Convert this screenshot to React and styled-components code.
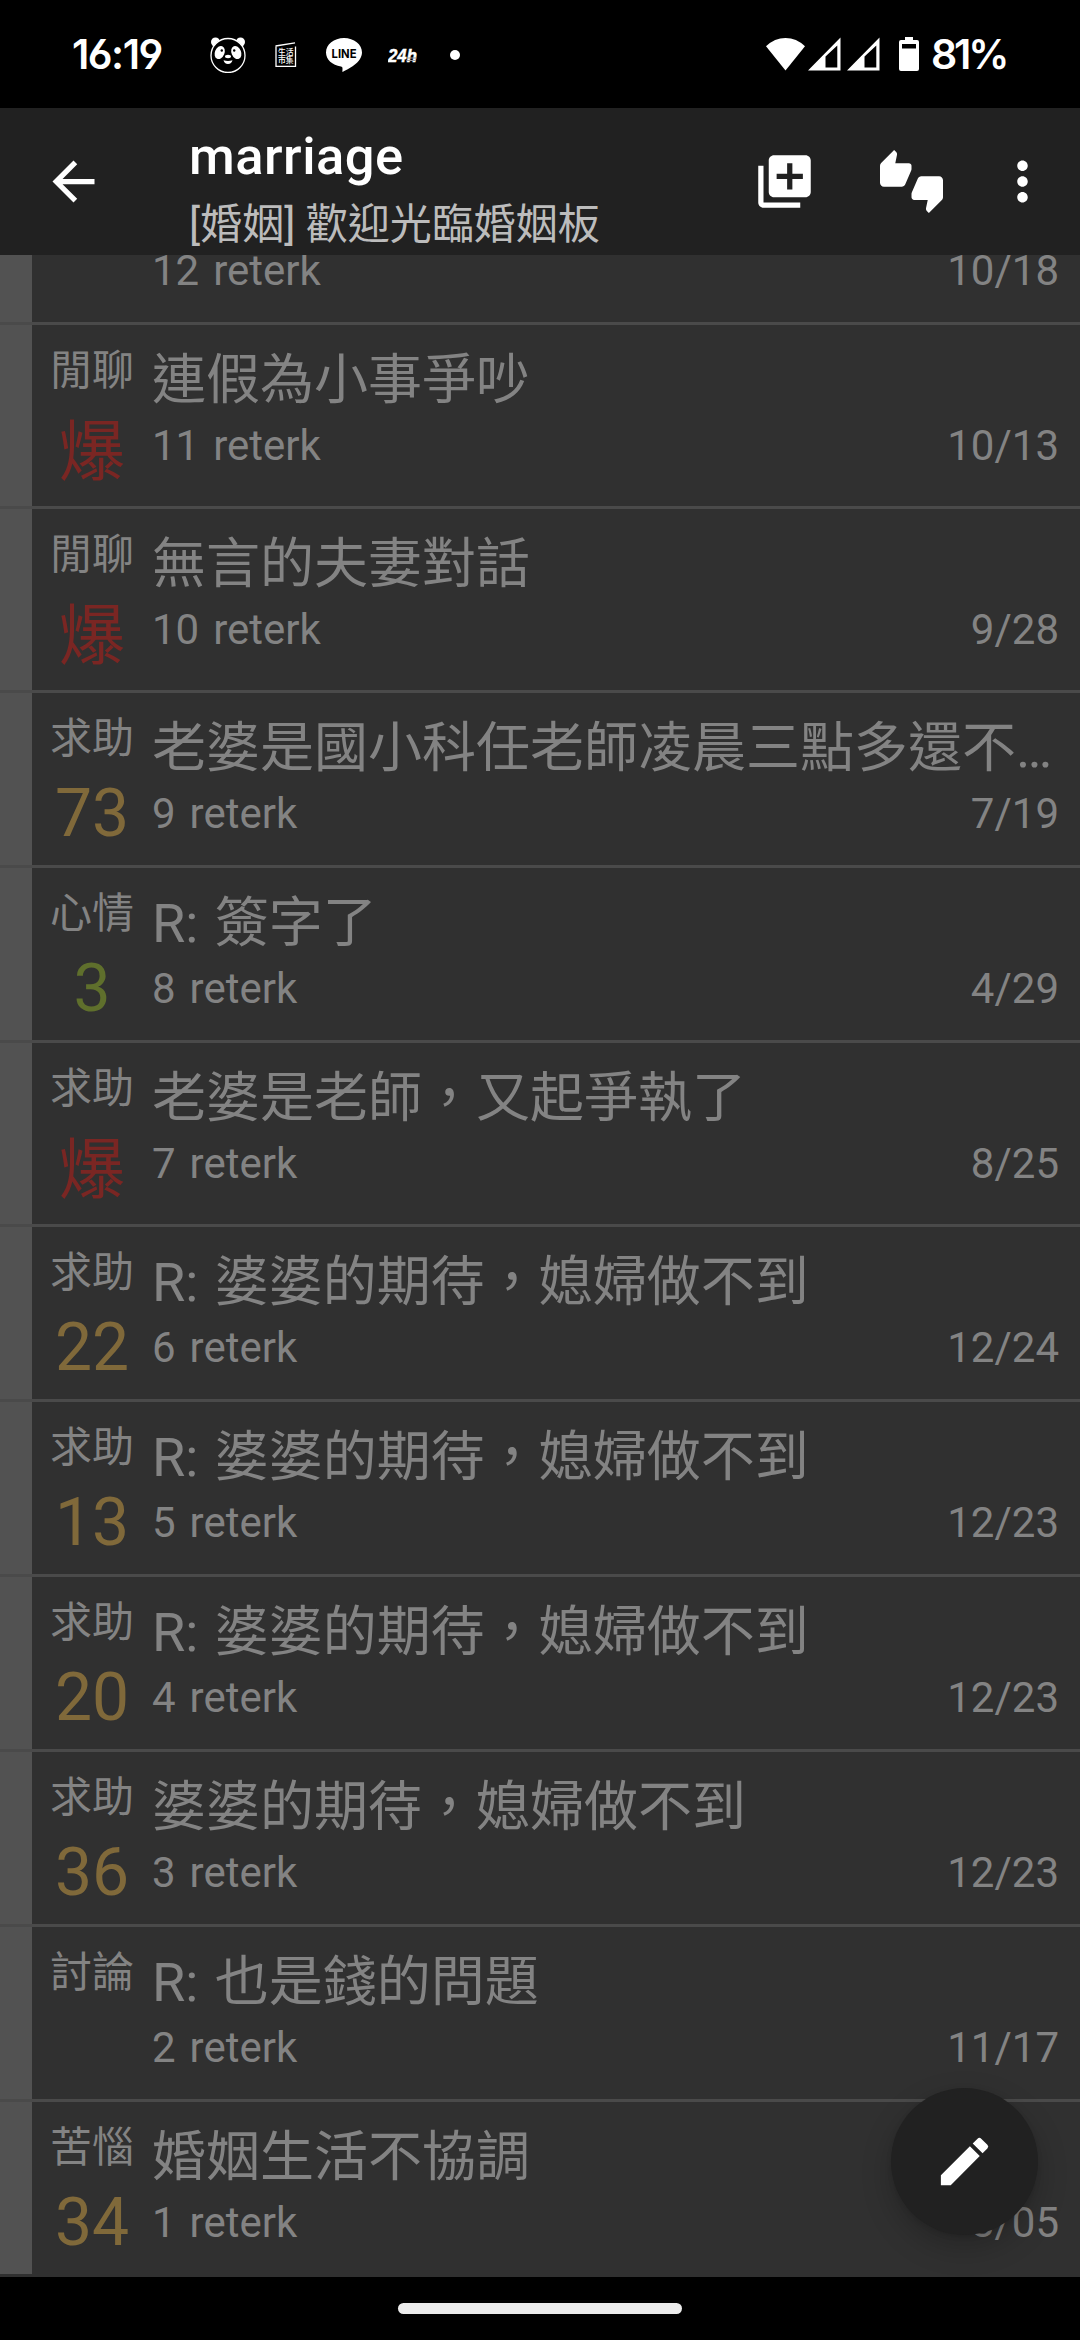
import React from "react";
import styled, { createGlobalStyle } from "styled-components";
import {
  MdArrowBack,
  MdEdit,
  MdLibraryAdd,
  MdMoreVert,
  MdThumbsUpDown,
} from "react-icons/md";

const GlobalStyle = createGlobalStyle`
  * {
    box-sizing: border-box;
  }
  body {
    margin: 0;
    background: #000;
    font-family: Roboto, "Noto Sans CJK TC", sans-serif;
  }
`;

const countColors = {
  hot: "#7a2623",
  mid: "#80693a",
  low: "#5f6f2c",
};

const posts = [
  { id: 12, tag: "", title: "", date: "10/18" },
  { id: 11, tag: "閒聊", title: "連假為小事爭吵", date: "10/13", count: "爆", level: "hot" },
  { id: 10, tag: "閒聊", title: "無言的夫妻對話", date: "9/28", count: "爆", level: "hot" },
  { id: 9, tag: "求助", title: "老婆是國小科任老師凌晨三點多還不…", date: "7/19", count: "73", level: "mid" },
  { id: 8, tag: "心情", title: "R: 簽字了", date: "4/29", count: "3", level: "low" },
  { id: 7, tag: "求助", title: "老婆是老師，又起爭執了", date: "8/25", count: "爆", level: "hot" },
  { id: 6, tag: "求助", title: "R: 婆婆的期待，媳婦做不到", date: "12/24", count: "22", level: "mid" },
  { id: 5, tag: "求助", title: "R: 婆婆的期待，媳婦做不到", date: "12/23", count: "13", level: "mid" },
  { id: 4, tag: "求助", title: "R: 婆婆的期待，媳婦做不到", date: "12/23", count: "20", level: "mid" },
  { id: 3, tag: "求助", title: "婆婆的期待，媳婦做不到", date: "12/23", count: "36", level: "mid" },
  { id: 2, tag: "討論", title: "R: 也是錢的問題", date: "11/17" },
  { id: 1, tag: "苦惱", title: "婚姻生活不協調", date: "8/05", count: "34", level: "mid" },
];

const PandaIcon = () => (
  <svg width="36" height="36" viewBox="0 0 36 36">
    <circle cx="5.500" cy="5" r="4.500" fill="#fff" />
    <circle cx="30.500" cy="5" r="4.500" fill="#fff" />
    <circle cx="18" cy="18.500" r="17" fill="#000" stroke="#fff" strokeWidth="1.300" />
    <ellipse cx="9.700" cy="15.500" rx="4.800" ry="6.800" fill="#fff" transform="rotate(22 9.700 15.500)" />
    <ellipse cx="26.300" cy="15.500" rx="4.800" ry="6.800" fill="#fff" transform="rotate(-22 26.300 15.500)" />
    <circle cx="11.800" cy="13.500" r="1.200" fill="#000" />
    <circle cx="24.200" cy="13.500" r="1.200" fill="#000" />
    <ellipse cx="18" cy="19.500" rx="3" ry="1.700" fill="#fff" />
    <path d="M13.500 23.300q4.500 1.600 9 0q-.8 3.700-4.500 3.700t-4.500-3.700z" fill="#fff" />
  </svg>
);

const MarketIcon = () => (
  <svg width="22" height="26" viewBox="0 0 22 26">
    <path d="M1 4.500V24.300H20.500V4.500M.5 4L20 .8" fill="none" stroke="#fff" strokeWidth="1.300" />
    <text x="3" y="13" fontSize="7.800" fontWeight="500" fill="#fff" fontFamily="Noto Sans CJK TC">生活</text>
    <text x="3" y="21.300" fontSize="7.800" fontWeight="500" fill="#fff" fontFamily="Noto Sans CJK TC">市集</text>
  </svg>
);

const LineIcon = () => (
  <svg width="36" height="36" viewBox="0 0 36 36">
    <path d="M18 1C8 1 0 7.400 0 15.500c0 7.200 6.200 12.600 15 14 1.700.4 1.700 1.300 1.400 5.500 5.600-2.600 19.600-9.500 19.600-19.500C36 7.400 28 1 18 1z" fill="#fff" />
    <text x="18" y="20.700" textAnchor="middle" fontSize="12" fontWeight="700" textLength="25" lengthAdjust="spacingAndGlyphs" fill="#000" fontFamily="Inter">LINE</text>
  </svg>
);

const DayIcon = () => (
  <svg width="34" height="26" viewBox="0 0 34 26">
    <text x="0" y="20" fontSize="19" fontWeight="700" fontStyle="italic" textLength="29" lengthAdjust="spacingAndGlyphs" fill="#fff" stroke="#fff" strokeWidth=".5" fontFamily="Liberation Sans">24h</text>
    <path d="M19 16h9.500M18.500 18.500h9.500" stroke="#999" strokeWidth="1.200" />
  </svg>
);

const WifiIcon = () => (
  <svg width="39" height="34" viewBox="0 0 39 34">
    <path d="M0 9.300Q8.500 1 19.500 1T39 9.300L19.500 33.500z" fill="#fff" />
  </svg>
);

const SignalIcon = () => (
  <svg width="33" height="34" viewBox="0 0 33 34">
    <path fillRule="evenodd" d="M0 33.500L32.500 .5V33.500zM17.500 19.500V30.500H29.300V8.500z" fill="#fff" />
  </svg>
);

const BatteryIcon = () => (
  <svg width="20" height="34" viewBox="0 0 20 34">
    <path fillRule="evenodd" d="M6 0h8v3h4q2 0 2 2v27q0 2-2 2H2q-2 0-2-2V5q0-2 2-2h4zM3 7v4.500h14V7z" fill="#fff" />
  </svg>
);

const Post = ({ id, tag, title, date, count, level }) => (
  <Row>
    <ReadMark />
    <Side>
      <Tag>{tag}</Tag>
      <Count $level={level}>{count}</Count>
    </Side>
    <Body>
      <Title>{title}</Title>
      <Meta>
        <Author>
          <span>{id}</span>
          <span>reterk</span>
        </Author>
        <span>{date}</span>
      </Meta>
    </Body>
  </Row>
);

export default function App() {
  return (
    <Screen>
      <GlobalStyle />
      <StatusBar>
        <Clock>16:19</Clock>
        <Notifications>
          <PandaIcon />
          <MarketIcon />
          <LineIcon />
          <DayIcon />
          <Dot />
        </Notifications>
        <System>
          <WifiIcon />
          <SignalIcon />
          <SignalIcon />
          <BatteryIcon />
        </System>
        <Percent>81%</Percent>
      </StatusBar>

      <Toolbar>
        <IconButton $gap={84}>
          <MdArrowBack />
        </IconButton>
        <Heading>
          <BoardName>marriage</BoardName>
          <BoardTitle>[婚姻] 歡迎光臨婚姻板</BoardTitle>
        </Heading>
        <IconButton $gap={64}>
          <MdLibraryAdd />
        </IconButton>
        <IconButton $gap={48}>
          <MdThumbsUpDown />
        </IconButton>
        <IconButton $gap={26}>
          <MdMoreVert />
        </IconButton>
      </Toolbar>

      <List>
        {posts.map((post) => (
          <Post key={post.id} {...post} />
        ))}
      </List>

      <Fab>
        <MdEdit />
      </Fab>

      <NavBar>
        <Handle />
      </NavBar>
    </Screen>
  );
}

const Screen = styled.div`
  position: relative;
  display: flex;
  flex-direction: column;
  width: 1080px;
  height: 2340px;
  overflow: hidden;
  background: #000;
`;

const StatusBar = styled.header`
  display: flex;
  align-items: center;
  height: 108px;
  padding: 0 75px 0 72px;
  color: #fff;

  svg {
    display: block;
    flex: none;
  }
`;

const Clock = styled.div`
  width: 138px;
  padding-bottom: 1px;
  font-family: Inter, sans-serif;
  font-feature-settings: "cv03", "cv04";
  font-size: 41px;
  font-weight: 600;
  letter-spacing: -1.5px;
  line-height: 50px;
`;

const Notifications = styled.div`
  display: flex;
  align-items: center;
  gap: 29px;
  padding-top: 2px;

  svg:nth-child(4) {
    margin-left: -3px;
  }
`;

const Dot = styled.span`
  width: 10px;
  height: 10px;
  margin-left: -1px;
  border-radius: 50%;
  background: #fff;
`;

const System = styled.div`
  display: flex;
  align-items: center;
  gap: 6px;
  margin-left: auto;

  svg:first-child {
    margin-right: -3px;
  }
  svg:last-child {
    margin-left: 13px;
  }
`;

const Percent = styled.div`
  width: 74px;
  margin-left: 12px;
  padding-bottom: 1px;
  font-family: Inter, sans-serif;
  font-size: 41px;
  font-weight: 600;
  letter-spacing: -3.2px;
  line-height: 50px;
  white-space: nowrap;
`;

const Toolbar = styled.div`
  display: flex;
  align-items: center;
  height: 147px;
  padding-left: 42px;
  background: #212121;
  color: #fff;
`;

const IconButton = styled.button`
  display: flex;
  flex: none;
  margin: 0 ${(props) => props.$gap}px 0 0;
  padding: 0;
  border: 0;
  background: none;
  color: inherit;
  font-size: 63px;
`;

const Heading = styled.div`
  flex: 1;
  padding-top: 20px;
`;

const BoardName = styled.h1`
  margin: 0;
  font-size: 52.5px;
  font-weight: 500;
  letter-spacing: 0.5px;
  line-height: 65px;
`;

const BoardTitle = styled.p`
  margin: 0;
  color: #bcbcbc;
  font-size: 42px;
  line-height: 71px;
  white-space: nowrap;
`;

/* scrolled to the end, so the first row slides under the toolbar */
const List = styled.main`
  display: flex;
  flex: 1;
  flex-direction: column;
  justify-content: flex-end;
  min-height: 0;
  overflow: hidden;
  background: #303030;
  color: #838383;
`;

const Row = styled.article`
  display: flex;
  flex: none;
  border-bottom: 3px solid #4a4a4a;

  &:last-child {
    border-color: #303030;
  }
`;

const ReadMark = styled.div`
  width: 32px;
  background: #525252;
`;

const Side = styled.div`
  width: 120px;
  padding: 21px 0 13px;
  text-align: center;
`;

const Tag = styled.div`
  height: 50px;
  font-size: 42px;
  line-height: 50px;
`;

/* the fallback glyph for an overflowing count is taller than the digits */
const Count = styled.div`
  height: ${(props) => (props.$level === "hot" ? 87 : 78)}px;
  margin-top: 10px;
  color: ${(props) => countColors[props.$level]};
  font-size: 66px;
  line-height: ${(props) => (props.$level === "hot" ? 93 : 80)}px;
`;

const Body = styled.div`
  flex: 1;
  min-width: 0;
  padding: 24px 21px 0 0;
`;

const Title = styled.h2`
  height: 64px;
  margin: 0 0 8px;
  font-size: 54px;
  font-weight: 400;
  line-height: 64px;
  white-space: nowrap;
  word-spacing: 3px;
`;

const Meta = styled.div`
  display: flex;
  justify-content: space-between;
  font-size: 42px;
  line-height: 50px;
`;

const Author = styled.div`
  display: flex;
  gap: 14px;
`;

const Fab = styled.button`
  position: absolute;
  right: 42px;
  bottom: 105px;
  display: flex;
  align-items: center;
  justify-content: center;
  width: 147px;
  height: 147px;
  padding: 0;
  border: 0;
  border-radius: 50%;
  background: #212121;
  box-shadow: 0 12px 30px rgba(0, 0, 0, 0.22), 0 2px 5px rgba(0, 0, 0, 0.1);
  color: #fff;
  font-size: 63px;
`;

const NavBar = styled.footer`
  display: flex;
  justify-content: center;
  height: 63px;
  padding-top: 26px;
  background: #000;
`;

const Handle = styled.div`
  width: 284px;
  height: 11px;
  border-radius: 6px;
  background: #ececec;
`;
